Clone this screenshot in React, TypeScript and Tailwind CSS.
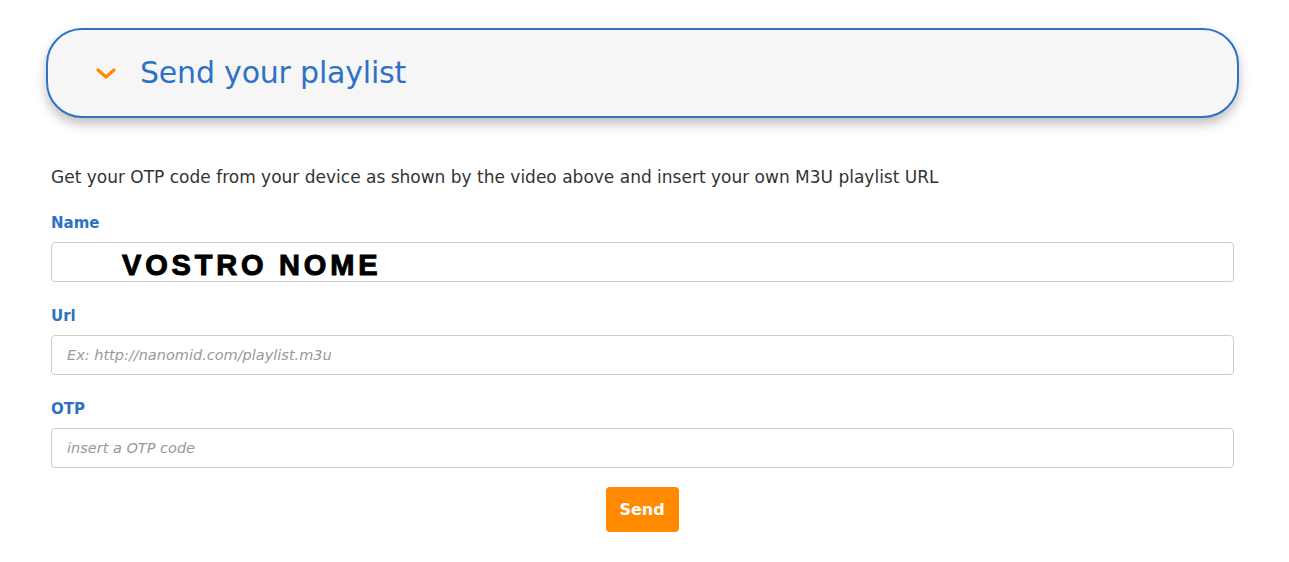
import React from "react";

const App: React.FC = () => {
  return (
    <div
      className="min-h-screen bg-white text-[#333] pt-[28px]"
      style={{ fontFamily: "'DejaVu Sans', Verdana, sans-serif" }}
    >
      <div className="px-[46px] w-[1285px]">
        {/* Header */}
        <div className="h-[90px] rounded-[36px] border-2 border-[#2f72c4] bg-[#f6f6f6] shadow-[0_6px_12px_rgba(0,0,0,0.25)] flex items-center pl-[47px]">
          <svg width="22" height="14" viewBox="0 0 22 14" className="mr-[23px] mt-[2px]">
            <path
              d="M3 3l8 7 8-7"
              fill="none"
              stroke="#ff8a00"
              strokeWidth="3.2"
              strokeLinecap="round"
              strokeLinejoin="round"
            />
          </svg>
          <h2 className="text-[30px] text-[#2f72c4] tracking-[-0.2px] leading-none">
            Send your playlist
          </h2>
        </div>
      </div>

      {/* Form */}
      <div className="pl-[51px] pr-[55px] pt-[49px]">
        <p className="text-[17px] leading-[20px]">
          Get your OTP code from your device as shown by the video above and insert your own M3U playlist URL
        </p>

        <label className="block mt-[26px] text-[15px] font-bold text-[#2f72c4] leading-[20px]">
          Name
        </label>
        <div className="mt-[9px] h-[40px] border border-[#ccc] rounded-[4px] flex items-center overflow-hidden">
          <span
            className="ml-[70px] mt-[6px] text-[29px] font-black text-black leading-none tracking-[3.8px]"
            style={{ fontFamily: "'Liberation Sans', Arial, sans-serif", WebkitTextStroke: "1px #000" }}
          >
            VOSTRO NOME
          </span>
        </div>

        <label className="block mt-[24px] text-[15px] font-bold text-[#2f72c4] leading-[20px]">
          Url
        </label>
        <input
          className="mt-[9px] block w-full h-[40px] border border-[#ccc] rounded-[4px] px-[15px] text-[14.5px] italic outline-none placeholder:text-[#999]"
          placeholder="Ex: http://nanomid.com/playlist.m3u"
        />

        <label className="block mt-[24px] text-[15px] font-bold text-[#2f72c4] leading-[20px]">
          OTP
        </label>
        <input
          className="mt-[9px] block w-full h-[40px] border border-[#ccc] rounded-[4px] px-[15px] text-[14.5px] italic outline-none placeholder:text-[#999]"
          placeholder="insert a OTP code"
        />

        <div className="flex justify-center mt-[19px] pr-[1px]">
          <button className="w-[73px] h-[45px] rounded-[4px] bg-[#ff8a00] text-white text-[16px] font-semibold">
            Send
          </button>
        </div>
      </div>
    </div>
  );
};

export default App;
